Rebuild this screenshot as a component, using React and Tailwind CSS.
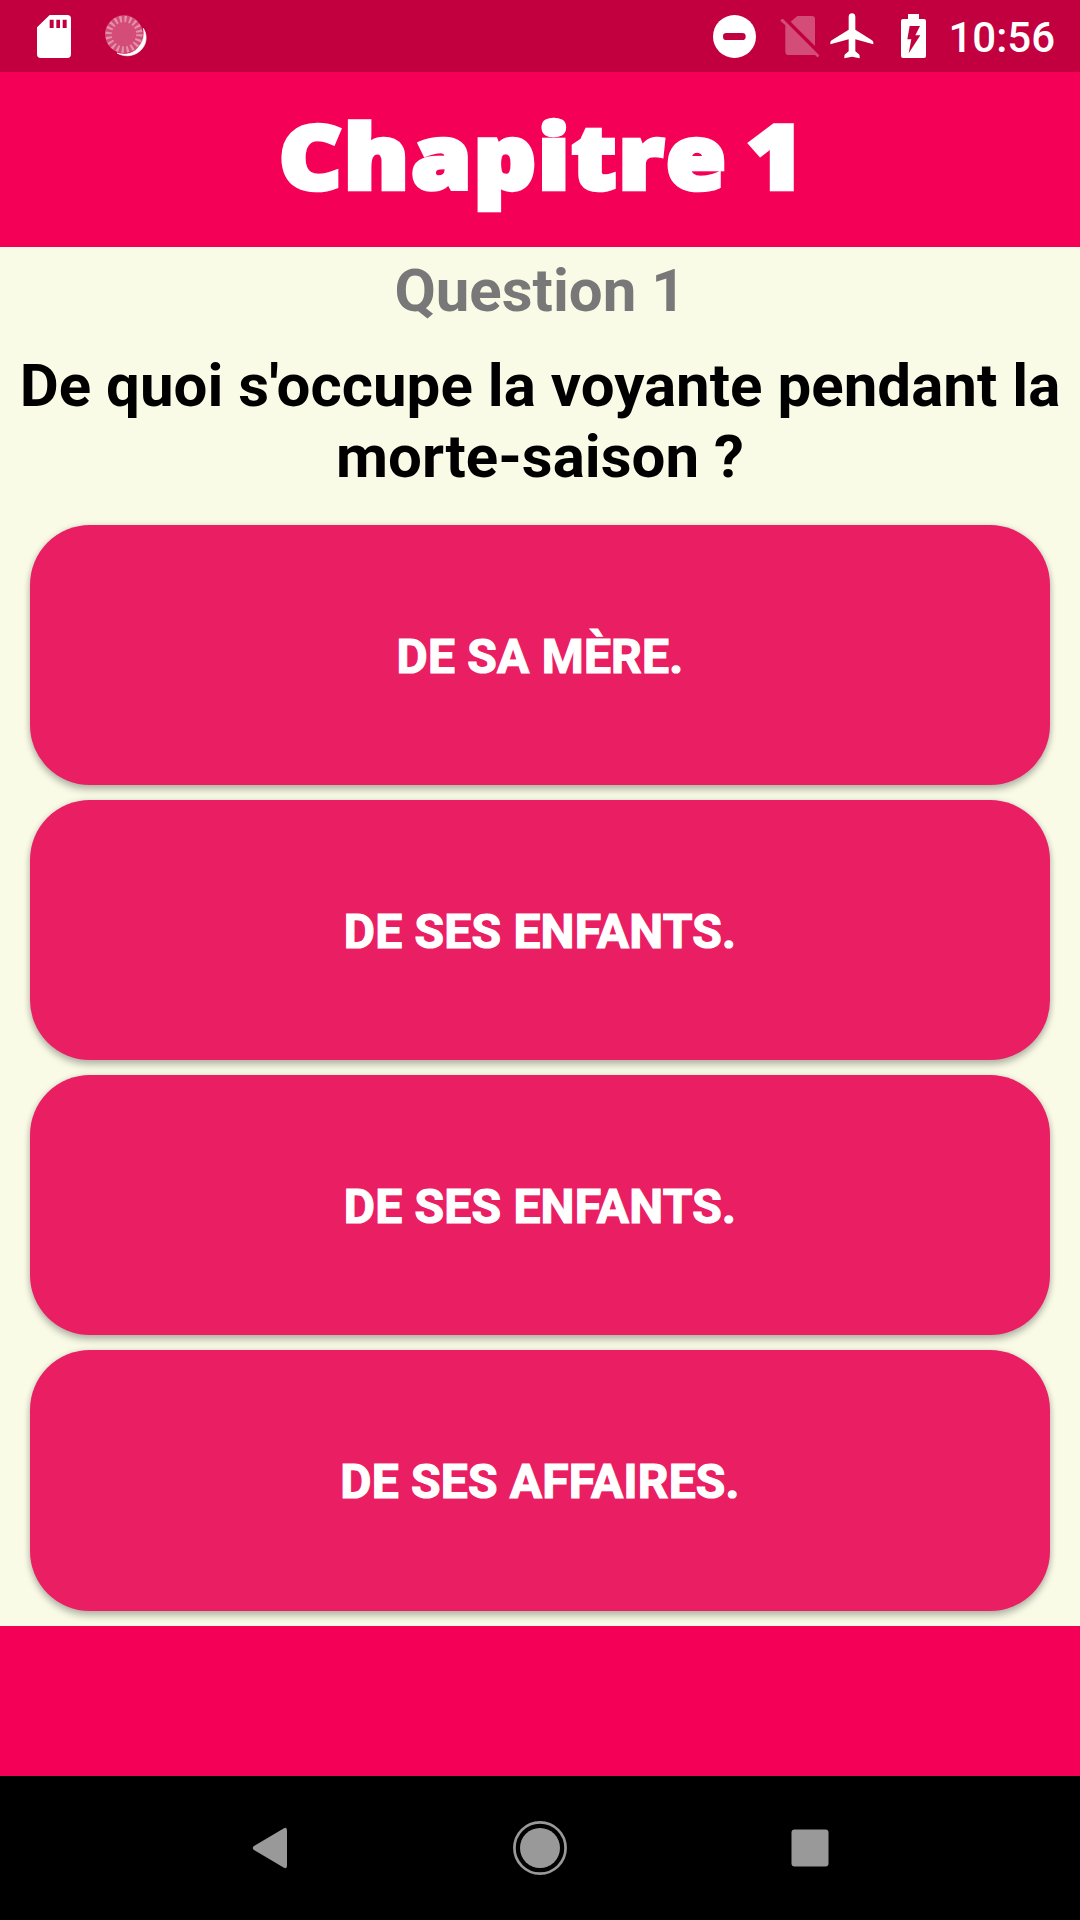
import clsx from "clsx";

const answers = [
  { id: 1, label: "De sa mère." },
  { id: 2, label: "De ses enfants." },
  { id: 3, label: "De ses enfants." },
  { id: 4, label: "De ses affaires." },
];

function SdCardIcon() {
  return (
    <svg viewBox="0 0 102 129" className="w-[34px] h-[43px] shrink-0" fill="#fff">
      <path
        fillRule="evenodd"
        d="M38 0H91Q102 0 102 11V118Q102 129 91 129H11Q0 129 0 118V37ZM38 14V39H50V14ZM58 14V39H69V14ZM77 14V39H89V14Z"
      />
    </svg>
  );
}

// Sync disc with a bright crescent on its lower right side
function DiscIcon() {
  return (
    <svg viewBox="0 0 126 126" className="w-[42px] h-[42px] shrink-0">
      <path
        d="M115 40C129 62 125 90 106 107C86 125 58 127 36 114C64 122 86 115 100 97C115 79 119 61 115 40Z"
        fill="#fff"
        stroke="#fff"
        strokeWidth="2"
      />
      <circle cx="57" cy="58" r="57" fill="#fff" fillOpacity="0.3" />
      <circle
        cx="57"
        cy="58"
        r="46"
        fill="none"
        stroke="#fff"
        strokeOpacity="0.38"
        strokeWidth="19"
        strokeDasharray="6.5 7.95"
      />
    </svg>
  );
}

function DoNotDisturbIcon() {
  return (
    <svg viewBox="0 0 129 129" className="w-[43px] h-[43px] shrink-0">
      <circle cx="64.5" cy="64.5" r="64.5" fill="#fff" />
      <rect x="30" y="54" width="68" height="21" rx="10" fill="#c2003f" />
    </svg>
  );
}

function NoSimIcon() {
  return (
    <svg viewBox="270 45 120 129" className="w-10 h-[43px] shrink-0">
      <g fill="#fff" opacity="0.3">
        <path d="M322 48H366Q375 48 375 57V138L302 65Z" />
        <path d="M271 62Q274 55 280 58L387 165Q388 171 382 172L375 165H296Q286 165 286 155V76Z" />
      </g>
    </svg>
  );
}

function AirplaneIcon() {
  return (
    <svg viewBox="420 38 132 138" className="w-11 h-[46px] shrink-0" fill="#fff">
      <path d="M476 49Q477 39 486 39Q495 39 496 49V88L546 120Q550 123 550 127V132L496 117V153L506 161Q509 164 509 168V174L486 169L463 174V168Q463 164 466 161L476 153V117L421 132V127Q421 123 425 120L476 88Z" />
    </svg>
  );
}

function BatteryIcon() {
  return (
    <svg viewBox="633 42 75 132" className="w-[25px] h-11 shrink-0" fill="#fff">
      <path
        fillRule="evenodd"
        d="M654 42H687V57H702Q708 57 708 63V168Q708 174 702 174H639Q633 174 633 168V63Q633 57 639 57H654ZM659 78L652 118H664L656 160L691 106H676L690 78Z"
      />
    </svg>
  );
}

function StatusBar() {
  return (
    <div className="h-[72px] shrink-0 bg-[#c2003f] flex items-center pl-[37px] pr-[25px]">
      <SdCardIcon />
      <div className="ml-[34px] flex">
        <DiscIcon />
      </div>
      <div className="ml-auto flex items-center">
        <DoNotDisturbIcon />
        <div className="ml-6 mt-px">
          <NoSimIcon />
        </div>
        <div className="ml-[10px]">
          <AirplaneIcon />
        </div>
        <div className="ml-[27px]">
          <BatteryIcon />
        </div>
        <span className="ml-[22px] pt-[3px] text-[42px] leading-none font-medium text-white">
          10:56
        </span>
      </div>
    </div>
  );
}

function NavigationBar() {
  return (
    <div className="h-36 shrink-0 bg-black flex items-center justify-center gap-[216px]">
      <svg viewBox="0 0 54 54" className="w-[54px] h-[54px]" fill="#999">
        <path d="M11 25L40.500 7.500Q44 5.500 44 9.500V44.500Q44 48.500 40.500 46.500L11 29Q8.500 27 11 25Z" />
      </svg>
      <svg viewBox="0 0 54 54" className="w-[54px] h-[54px]">
        <circle cx="27" cy="27" r="25.6" fill="none" stroke="#999" strokeWidth="2.7" />
        <circle cx="27" cy="27" r="20" fill="#999" />
      </svg>
      <svg viewBox="0 0 54 54" className="w-[54px] h-[54px]" fill="#999">
        <rect x="8.5" y="8.5" width="37" height="37" rx="3" />
      </svg>
    </div>
  );
}

export default function App() {
  return (
    <div className="w-[1080px] h-[1920px] flex flex-col overflow-hidden bg-[#f9fbe7] font-['Roboto',sans-serif]">
      <StatusBar />

      {/* Chapter header */}
      <header className="h-[175px] shrink-0 bg-[#f50057] flex justify-center pl-[5px]">
        <h1 className="mt-[28px] text-[88px] leading-[110px] whitespace-nowrap font-extrabold text-white font-['Open_Sans',sans-serif] [-webkit-text-stroke:4.5px_#fff] tracking-[2px] [word-spacing:-8px] scale-x-[1.1]">
          Chapitre 1
        </h1>
      </header>

      {/* Question */}
      <main className="h-[1379px] shrink-0 flex flex-col text-center">
        <h2 className="mt-2 text-[60px] leading-[71px] font-bold text-[#787878]">
          Question 1
        </h2>
        <p className="mt-[24px] text-[60px] leading-[71px] font-bold text-black tracking-[0.03px]">
          De quoi s'occupe la voyante pendant la
          <br />
          morte-saison ?
        </p>

        {/* Answers */}
        <div className="mt-[33px] px-[30px] flex flex-col gap-[15px]">
          {answers.map((answer) => (
            <button
              key={answer.id}
              type="button"
              className={clsx(
                "w-full pt-[3px] rounded-[60px] bg-[#e91e63] text-white text-[48px] leading-none font-bold uppercase",
                "[-webkit-text-stroke:1.2px_#fff] tracking-[0.2px]",
                "shadow-[0_5px_7px_rgba(0,0,0,0.24),0_0_6px_rgba(0,0,0,0.12)]",
                answer.id === 4 ? "h-[261px]" : "h-[260px]"
              )}
            >
              {answer.label}
            </button>
          ))}
        </div>
      </main>

      <footer className="h-[150px] shrink-0 bg-[#f50057]" />
      <NavigationBar />
    </div>
  );
}
